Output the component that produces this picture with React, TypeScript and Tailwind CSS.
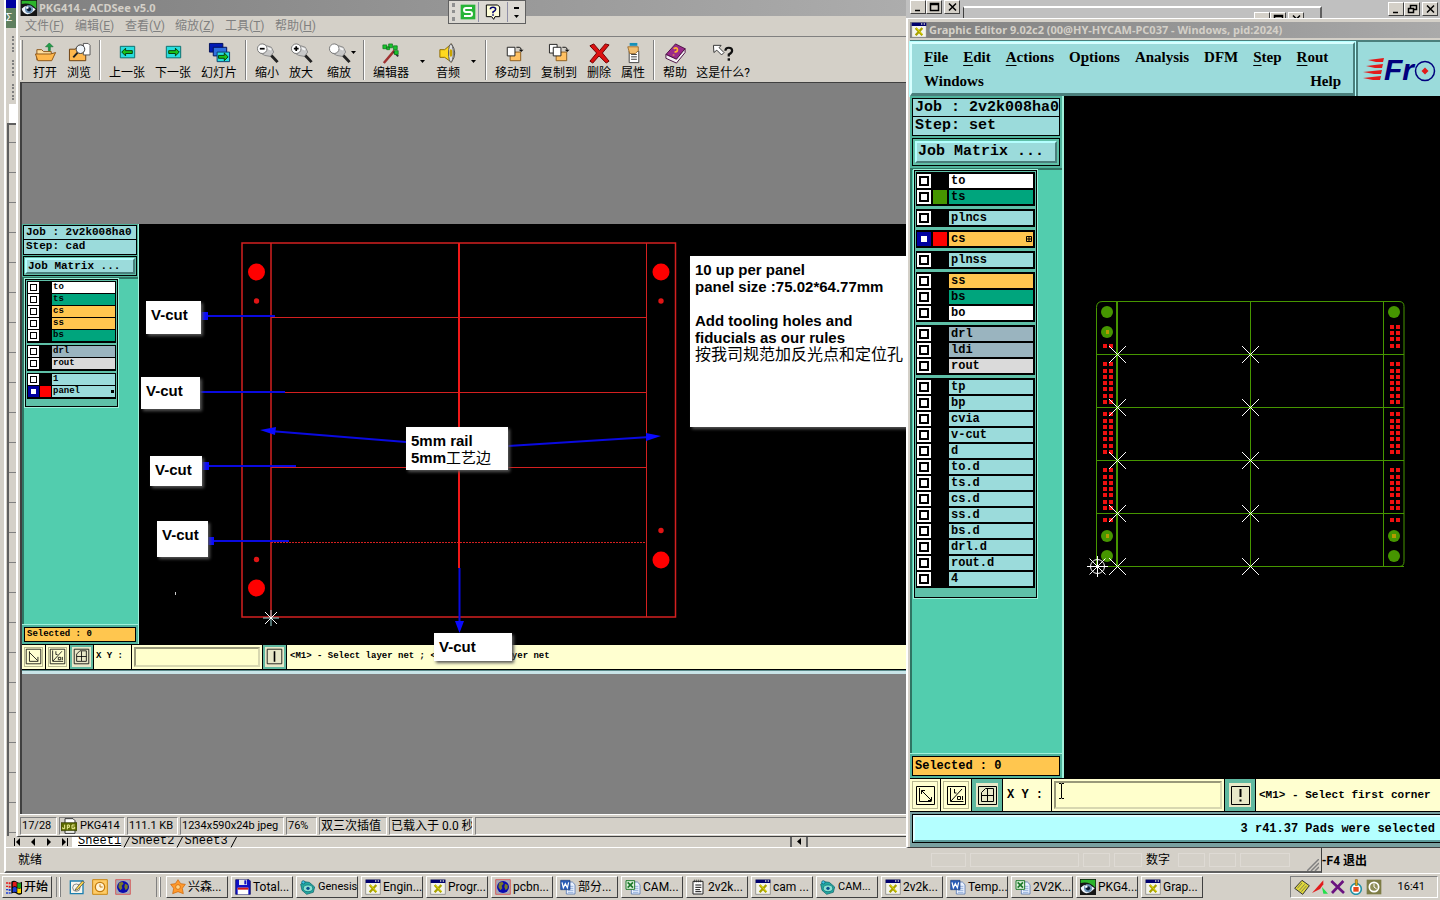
import { Fragment, type ReactNode } from 'react';

/**
 * CAM workstation desktop: spreadsheet at the back, ACDSee viewer on the left,
 * Graphic Editor on the right, taskbar below.
 */

const RAISED = 'border border-t-white border-l-white border-r-[#404040] border-b-[#404040] bg-[#d4d0c8]';
const SUNKEN = 'border border-t-[#808080] border-l-[#808080] border-r-white border-b-white';

type Layer = { name: string; bg: string; swatch?: string; active?: boolean };

const WHITE = 'bg-white';
const GREEN = 'bg-[#00a57d]';
const CYAN = 'bg-[#9bdbdb]';
const AMBER = 'bg-[#ffc64f]';
const SLATE = 'bg-[#9ab4bf]';
const SILVER = 'bg-[#dadada]';

const SET_LAYERS: Layer[][] = [
  [
    { name: 'to', bg: WHITE },
    { name: 'ts', bg: GREEN, swatch: 'bg-[#469600]' },
  ],
  [{ name: 'plncs', bg: CYAN }],
  [{ name: 'cs', bg: AMBER, swatch: 'bg-[#ff0000]', active: true }],
  [{ name: 'plnss', bg: CYAN }],
  [
    { name: 'ss', bg: AMBER },
    { name: 'bs', bg: GREEN },
    { name: 'bo', bg: WHITE },
  ],
  [
    { name: 'drl', bg: SLATE },
    { name: 'ldi', bg: SLATE },
    { name: 'rout', bg: SILVER },
  ],
  ['tp', 'bp', 'cvia', 'v-cut', 'd', 'to.d', 'ts.d', 'cs.d', 'ss.d', 'bs.d', 'drl.d', 'rout.d', '4'].map((name) => ({
    name,
    bg: CYAN,
  })),
];

const CAD_LAYERS: Layer[][] = [
  [
    { name: 'to', bg: WHITE },
    { name: 'ts', bg: GREEN },
    { name: 'cs', bg: AMBER },
    { name: 'ss', bg: AMBER },
    { name: 'bs', bg: GREEN },
  ],
  [
    { name: 'drl', bg: SLATE },
    { name: 'rout', bg: SILVER },
  ],
  [
    { name: '1', bg: CYAN },
    { name: 'panel', bg: CYAN, swatch: 'bg-[#ff0000]', active: true },
  ],
];

/* ---------- icons ---------- */

type IconName =
  | 'open' | 'browse' | 'prev' | 'next' | 'slides' | 'zoomOut' | 'zoomIn' | 'zoom'
  | 'editor' | 'audio' | 'move' | 'copy' | 'delete' | 'props' | 'help' | 'what'
  | 'eye' | 'xwin' | 'star' | 'floppy' | 'genesis' | 'globe' | 'word' | 'excel'
  | 'note' | 'flag' | 'pencil' | 'clock' | 'jpg' | 'sogou' | 'question'
  | 'diamond' | 'wedge' | 'cross' | 'pot' | 'tclock';

const lens = (
  <>
    <path d="M7 2.500l9 3 2.500 5-3.500 4.500-6-1L4 11z" fill="#c8c8c8" stroke="#8a8a8a" />
    <path d="M9 5l7 3" stroke="#f4f4f4" strokeWidth="2" />
    <path d="M16 14l6.500 7" stroke="#222" strokeWidth="3" />
    <circle cx="6.500" cy="7" r="5" fill="#fff" stroke="#777" />
  </>
);

const pageToFolder = (
  <>
    <path d="M8.500 12.500h4l1-2h6v9h-11z" fill="#ffc163" stroke="#8d5d1e" />
    <path d="M5.500 5.500h8v9h-8z" fill="#fff" stroke="#222" />
    <path d="M15 5.500h3q2 0 2 3" fill="none" stroke="#111" />
    <path d="M17.500 8h5L20 10.500z" fill="#111" />
  </>
);

const doc = (
  <>
    <path d="M9.500 4.500h9l4 4v14h-13z" fill="#e9f1ff" stroke="#3c63a8" />
    <path d="M14 11h6M14 14h6M12 17h8M12 20h8" stroke="#6d8fc9" />
  </>
);

const ICONS: Record<IconName, ReactNode> = {
  open: (
    <>
      <path d="M3 19V8h5l2 2h8v3" fill="#ffdf9e" stroke="#8a5418" />
      <path d="M1.500 12.500h16l5-1.500-4 8.500H4z" fill="#ffb84d" stroke="#8a5418" />
      <path d="M15 9V5h-3l4-4 4 4h-3v4z" fill="#22a04a" stroke="#0d6b2b" strokeWidth=".6" />
    </>
  ),
  browse: (
    <>
      <path d="M1.500 7.500h6l2-2h9v14h-17z" fill="#ffb84d" stroke="#6b3f10" />
      <path d="M16 1.500h5l2 2v10h-7z" fill="#fff" stroke="#555" />
      <circle cx="13" cy="7.500" r="4.500" fill="#eef4fa" stroke="#333" />
      <path d="M10 11l-4.500 5" stroke="#222" strokeWidth="2" />
    </>
  ),
  prev: (
    <>
      <path d="M4.500 4.500h15v12h-15z" fill="#27dede" stroke="#0b6d6d" />
      <path d="M6 10.500l4-4V9h7v3h-7v2.500z" fill="#19c219" stroke="#073f07" />
    </>
  ),
  next: (
    <>
      <path d="M4.500 4.500h15v12h-15z" fill="#27dede" stroke="#0b6d6d" />
      <path d="M18 10.500l-4-4V9H7v3h7v2.500z" fill="#19c219" stroke="#073f07" />
    </>
  ),
  slides: (
    <>
      <path d="M1.500 1.500h14v9h-14z" fill="#0019b5" stroke="#00105a" />
      <path d="M5.500 5.500h14v9h-14z" fill="#2f6fe0" stroke="#00105a" />
      <path d="M9.500 10.500h13v10h-13z" fill="#27dede" stroke="#0b3d6d" />
      <path d="M21 15.500l-4-4v2.500h-6v3h6v2.500z" fill="#19c219" stroke="#073f07" />
    </>
  ),
  zoomOut: (
    <>
      {lens}
      <path d="M4 7h5" stroke="#000" strokeWidth="1.800" />
    </>
  ),
  zoomIn: (
    <>
      {lens}
      <path d="M4 7h5M6.500 4.500v5" stroke="#000" strokeWidth="1.800" />
    </>
  ),
  zoom: lens,
  editor: (
    <>
      <path d="M4 22L15 9" stroke="#a03030" strokeWidth="2.500" />
      <path d="M14 10l5 5" stroke="#333" strokeWidth="2" />
      <path d="M3 3h4v4H3zM9 2h4v4H9zM14 4h4v4h-4zM15 9h4v4h-4zM7 5h3v3H7z" fill="#18c52c" stroke="#0b6f18" strokeWidth=".7" />
    </>
  ),
  audio: (
    <>
      <path d="M3 8h5l7-6v19l-7-5H3z" fill="#ffd91f" stroke="#8d6b00" />
      <path d="M15 2q7 9.500 0 19z" fill="#f4f4f4" stroke="#444" />
      <ellipse cx="14.500" cy="11.500" rx="2.500" ry="9.500" fill="#ddd" stroke="#555" />
      <ellipse cx="14.500" cy="11.500" rx="1.500" ry="4" fill="#c9a400" />
    </>
  ),
  move: pageToFolder,
  copy: (
    <>
      <path d="M1.500 2.500h8v9h-8z" fill="#fff" stroke="#222" />
      {pageToFolder}
    </>
  ),
  delete: <path d="M2 4l4-2 6 7 6-7 4 1-7 8.500 7 8.500-3 2-7.500-7.500L5 22l-3-2 7-8.500z" fill="#dd1111" stroke="#6d0000" />,
  props: (
    <>
      <path d="M7.500 9.500h10v12h-10z" fill="#fff" stroke="#444" />
      <path d="M9.500 13h6M9.500 15.500h6M9.500 18h6" stroke="#333" />
      <path d="M8 1h8v3H8z" fill="#1590b8" />
      <path d="M6 5h11v4l-3 3h-6z" fill="#f0bd6f" stroke="#8d5d1e" strokeWidth=".8" />
    </>
  ),
  help: (
    <>
      <path d="M2 13L12 2l10 5-9 11z" fill="#9a2a8b" stroke="#4b1044" />
      <path d="M2 13v4l11 5 9-11V7l-9 11z" fill="#f4f0f4" stroke="#4b1044" />
      <path d="M10 7q4-2 4 1t-3 2M10 13v1" stroke="#ffb42e" strokeWidth="1.800" fill="none" />
    </>
  ),
  what: (
    <>
      <path d="M1.500 3.500h8L7.500 6l5 5-2.500 2.500-5-5-3 2.500z" fill="#fff" stroke="#333" />
      <path d="M14 9q0-3 3.500-3T21 9q0 2-3.500 4v2" stroke="#111" strokeWidth="2.300" fill="none" />
      <path d="M16.300 17h2.500v2.500h-2.500z" fill="#111" />
    </>
  ),
  eye: (
    <>
      <path d="M0 0h24v24H0z" fill="#151515" />
      <path d="M1 1h22v12Q14 3 1 6z" fill="#2cb52c" />
      <path d="M1 13Q9 4 22 14q-8 9-14 7t-7-8z" fill="#eef4fa" />
      <circle cx="12" cy="14" r="6" fill="#6d93b8" />
      <circle cx="12" cy="14" r="3.200" fill="#0a1a30" />
      <circle cx="9.500" cy="11.500" r="1.800" fill="#fff" />
    </>
  ),
  xwin: (
    <>
      <path d="M1 1h22v22H1z" fill="#f4f4ec" stroke="#777" />
      <path d="M1 1h22v5H1z" fill="#00006e" />
      <path d="M15 2h2v2h-2zM19 2h2v2h-2z" fill="#c8c8c8" />
      <path d="M7 9l10 11M17 9L7 20" stroke="#a9a200" strokeWidth="3.500" />
      <path d="M8 9l9 10" stroke="#f1e800" strokeWidth="1.200" />
    </>
  ),
  star: (
    <>
      <path d="M12 1l4 6 7 1-4.500 6L20 22l-8-3-8 3 1.500-8L1 8l7-1z" fill="#ff9a2e" stroke="#c95f00" />
      <circle cx="12" cy="12" r="3.500" fill="#ffd48a" stroke="#c95f00" />
    </>
  ),
  floppy: (
    <>
      <path d="M1 1h20l2 2v20H1z" fill="#1010c8" stroke="#000050" />
      <path d="M6 1h12v8H6z" fill="#e8e8e8" />
      <path d="M14 2h3v6h-3z" fill="#1010c8" />
      <path d="M4 13h16v10H4z" fill="#fff" />
      <path d="M4 13h16v3H4z" fill="#d01818" />
    </>
  ),
  genesis: (
    <>
      <path d="M1 8l5-4 8 1 8 7-2 8-10 3-7-6z" fill="#22a8a0" stroke="#0a5a64" />
      <ellipse cx="12" cy="14" rx="7" ry="5" fill="#8be0d0" stroke="#0c6b73" />
      <circle cx="12" cy="14" r="2.500" fill="#0c4f8c" />
      <circle cx="5" cy="5" r="2.500" fill="#3fc3e8" stroke="#0a5a64" />
    </>
  ),
  globe: (
    <>
      <path d="M1 1h22v22H1z" fill="#a9a9b5" stroke="#d33" />
      <circle cx="12" cy="12" r="9" fill="#0a0ab0" />
      <path d="M6 6l5-2 2 3-3 3 1 4-3 3-3-5zM15 7l4 2v5l-3 3-2-5z" fill="#7a7a28" />
    </>
  ),
  word: (
    <>
      {doc}
      <path d="M1 2h14v14H1z" fill="#2a5db8" stroke="#163a7c" />
      <path d="M3 5l2 8 3-6 3 6 2-8" stroke="#fff" strokeWidth="1.800" fill="none" />
    </>
  ),
  excel: (
    <>
      {doc}
      <path d="M1.500 2.500h13v13h-13z" fill="#e2f3df" stroke="#1f7a2c" strokeWidth="1.500" />
      <path d="M4 5l8 8M12 5l-8 8" stroke="#1f7a2c" strokeWidth="2.600" />
    </>
  ),
  note: (
    <>
      <path d="M4.500 3.500h15v19h-15z" fill="#fff" stroke="#222" strokeWidth="1.500" />
      <path d="M7 1v4M10 1v4M13 1v4M16 1v4" stroke="#222" />
      <path d="M8 9h9M8 12.500h9M8 16h7M8 19h9" stroke="#111" strokeWidth="1.500" />
    </>
  ),
  flag: (
    <>
      <path d="M8 4q4-3 8 0t8 0v18q-4 3-8 0t-8 0z" fill="#000" />
      <path d="M10 5q3-2 6 0v7q-3-2-6 0z" fill="#e21b1b" />
      <path d="M17 6q3 1 5.500 0v7q-3 1-5.500 0z" fill="#1ca01c" />
      <path d="M10 13q3-2 6 0v7q-3-2-6 0z" fill="#1c3fd8" />
      <path d="M17 14q3 1 5.500 0v7q-3 1-5.500 0z" fill="#ffd800" />
      <path d="M0 5h3v2H0zM4 5h3v3H4zM0 10h3v2H0zM4 10h3v3H4z" fill="#e21b1b" />
      <path d="M0 15h3v2H0zM4 15h3v3H4zM0 20h3v2H0zM4 20h3v2H4z" fill="#1c3fd8" />
    </>
  ),
  pencil: (
    <>
      <path d="M2 3h19v19H2z" fill="#f6f6ee" stroke="#1c7fb0" strokeWidth="2" />
      <circle cx="11" cy="13" r="5.500" fill="none" stroke="#555" />
      <path d="M10 15L20 3l3 2-10 11-4 1z" fill="#ffd84d" stroke="#333" />
    </>
  ),
  clock: (
    <>
      <path d="M1 1h22v22H1z" fill="#ffcc66" stroke="#c98714" strokeWidth="1.500" />
      <circle cx="12" cy="12" r="7" fill="#fff4d8" stroke="#c07a10" strokeWidth="2" />
      <path d="M12 8v4h4" stroke="#c07a10" strokeWidth="1.500" fill="none" />
    </>
  ),
  jpg: (
    <>
      <path d="M6 1h12l3 3v19H6z" fill="#fff" stroke="#333" strokeWidth="1.500" />
      <path d="M0 7h24v12H0z" fill="#5d6b00" stroke="#2d3300" />
      <path d="M5.500 10v6H2.500v-2M9.500 17v-6.500h3V14h-3M20.500 10.500h-4V16h4v-2.500h-2" stroke="#f2f29a" strokeWidth="1.500" fill="none" />
    </>
  ),
  sogou: (
    <>
      <path d="M1 1h22v22H1z" fill="#27b437" />
      <path d="M18 6H9Q6 6 6 9t3 3h6q3 0 3 3t-3 3H6" stroke="#fff" strokeWidth="3" fill="none" />
    </>
  ),
  question: (
    <>
      <path d="M2 1.500h17l3 3V19h-7l-2 4-3-4H2z" fill="#ffffd8" stroke="#000" strokeWidth="1.500" />
      <path d="M8 8q0-3 4-3t4 3q0 2-4 4v2M12 15.500v2" stroke="#00006e" strokeWidth="2.300" fill="none" />
    </>
  ),
  diamond: (
    <>
      <path d="M1 14L12 2l11 8-10 13z" fill="#e0d83a" stroke="#333" strokeWidth="1.500" />
      <path d="M5 14l7-8M8 17l8-9M11 19l8-9" stroke="#555" />
    </>
  ),
  wedge: (
    <>
      <path d="M0 21L17 2v6l-5 7z" fill="#e21b1b" />
      <path d="M15 12l9 10h-7z" fill="#22e04a" />
    </>
  ),
  cross: <path d="M2 3l19 18M20 3L3 21" stroke="#6a1280" strokeWidth="4" />,
  pot: (
    <>
      <circle cx="12" cy="15" r="8" fill="#fff" stroke="#2293a8" strokeWidth="2.500" />
      <path d="M8 12h8v7H8z" fill="#e8481c" />
      <path d="M11 1h3v9h-3z" fill="#e8b31c" stroke="#8a5a00" />
    </>
  ),
  tclock: (
    <>
      <path d="M1 1h22v22H1z" fill="#7d7c45" />
      <circle cx="12" cy="12" r="7" fill="#8f8e58" stroke="#fff" strokeWidth="2.500" />
      <path d="M12 7v5l4 3" stroke="#fff" strokeWidth="1.500" fill="none" />
    </>
  ),
};

function Icon({ name, className = 'size-4' }: { name: IconName; className?: string }) {
  return (
    <svg viewBox="0 0 24 24" fill="none" aria-hidden="true" className={`shrink-0 ${className}`}>
      {ICONS[name]}
    </svg>
  );
}

function Caret({ className = '' }: { className?: string }) {
  return (
    <svg viewBox="0 0 5 3" aria-hidden="true" className={`h-[3px] w-[5px] ${className}`}>
      <path d="M0 0h5L2.500 3z" fill="#000" />
    </svg>
  );
}

/* ---------- Graphic Editor parts, shared by the live window and the opened capture ---------- */

function LayerList({ groups, small, id }: { groups: Layer[][]; small?: boolean; id: string }) {
  return (
    <div
      className={`flex flex-col border border-black bg-[#5fc0a8] outline outline-[#9ff0da] ${
        small ? 'w-[93px] gap-[2px] p-px pb-[7px]' : 'w-[123px] gap-[3px] p-px pb-[9px]'
      }`}
    >
      {groups.map((group, i) => (
        <div key={i} className="flex flex-col bg-black p-px">
          {group.map((l) => (
            <label
              key={l.name}
              htmlFor={`${id}-${l.name}`}
              className={`flex items-center ${small ? 'h-3 gap-px' : 'h-4 gap-[2px]'}`}
            >
              <span className={`flex shrink-0 p-[2px] ${l.active ? 'bg-[#0000a0]' : 'bg-white'}`}>
                <input
                  id={`${id}-${l.name}`}
                  type="checkbox"
                  defaultChecked={l.active}
                  className={`appearance-none border-black bg-white checked:border-[#0000a0] ${
                    small ? 'size-[7px] border' : 'size-[10px] border-2'
                  }`}
                />
              </span>
              <span className={`shrink-0 ${small ? 'size-[11px]' : 'size-[14px]'} ${l.swatch ?? 'bg-black'}`} />
              <span
                className={`flex flex-1 items-center justify-between ${l.bg} ${
                  small ? 'h-[11px] pl-px text-[9px] leading-[11px]' : 'mr-px h-[14px] pl-[2px] text-xs leading-[14px]'
                }`}
              >
                {l.name}
                {l.active && small && <span className="mr-px size-[3px] bg-black" />}
                {l.active && !small && (
                  <svg viewBox="0 0 6 6" className="mr-px size-[6px]" fill="none" stroke="#000">
                    <path d="M.5.5h5v5h-5zM.5 3h5M3 .5v5" />
                  </svg>
                )}
              </span>
            </label>
          ))}
        </div>
      ))}
    </div>
  );
}

function JobHeader({ step, small }: { step: string; small?: boolean }) {
  const row = small ? 'h-[15px] text-[11px] leading-[13px]' : 'h-[19px] text-[15px] leading-[18px]';
  return (
    <div className={`flex flex-col bg-[#4fb39c] ${small ? 'p-px' : 'p-[2px]'}`}>
      <div className={`overflow-hidden whitespace-pre border border-black bg-[#9bdbdb] px-[2px] ${row}`}>Job : 2v2k008ha0</div>
      <div className={`overflow-hidden whitespace-pre border border-t-0 border-black bg-[#9bdbdb] px-[2px] ${row}`}>Step: {step}</div>
      <div className={`border border-black bg-[#5fc0a8] ${small ? 'mt-px p-px' : 'mt-[2px] p-[2px]'}`}>
        <button
          type="button"
          className={`block w-full border-2 border-t-[#b4ffff] border-l-[#b4ffff] border-r-[#4a7f7c] border-b-[#4a7f7c] bg-[#9bdbdb] pl-px text-left ${
            small ? 'h-4 text-[11px] leading-3' : 'h-[22px] text-[15px] leading-[18px]'
          }`}
        >
          Job Matrix ...
        </button>
      </div>
    </div>
  );
}

function Sidebar({ step, groups, small, id }: { step: string; groups: Layer[][]; small?: boolean; id: string }) {
  return (
    <aside
      className={`flex shrink-0 flex-col border-r-[#9ff0da] bg-[#52cdae] font-bold ${
        small ? 'w-[117px] border-r' : 'w-[154px] border-r-2'
      }`}
    >
      <JobHeader step={step} small={small} />
      <div className={`flex-1 border-t-2 border-l-2 border-[#2f7563] ${small ? 'pl-px' : 'pl-[2px]'}`}>
        <LayerList groups={groups} small={small} id={id} />
      </div>
      <div className={`border-t border-[#9ff0da] bg-[#4fb39c] p-[2px] ${small ? 'text-[9px]' : 'text-xs'}`}>
        <div className={`whitespace-pre border border-black bg-[#ffc64f] pl-[2px] ${small ? 'h-[15px] leading-[13px]' : 'h-5 leading-[18px]'}`}>
          Selected : 0
        </div>
      </div>
    </aside>
  );
}

type ModeName = 'corner' | 'cross' | 'angle' | 'grid' | 'bang' | 'bar';

const MODES: Record<ModeName, ReactNode> = {
  corner: <path d="M5.500 4v12.500h11M5.500 5.500l10 10M16 11v5M12 16" />,
  cross: <path d="M4.500 3v13.500h12M6.500 5.500l10 10M6.500 9V5.500H10M16.500 12v3.500H13" />,
  angle: <path d="M4.500 3v13.500h13M5 16L16 4M8.500 4v4h2M11.500 11.500h3v3h-3zM16.500 11v4" />,
  grid: <path d="M8.500 3.500h8v13h-12v-9zM4.500 10.500h12M10.500 4v12" />,
  bang: <path d="M10.500 4v8M10.500 14.500v2" strokeWidth="2" />,
  bar: <path d="M10.500 4v13" strokeWidth="2" />,
};

function ModeButton({ mode, label, small, on }: { mode: ModeName; label: string; small?: boolean; on?: boolean }) {
  return (
    <button
      type="button"
      aria-label={label}
      className={`flex shrink-0 items-center justify-center ${small ? 'w-[23px] border-2' : 'w-[30px] border-4'} ${
        on ? 'border-[#5fb8a0] bg-[#e8e8c8]' : 'border-[#ffffd0] bg-[#ffffd0] outline-1 -outline-offset-3 outline-[#b8b890]'
      }`}
    >
      <svg viewBox="0 0 21 21" fill="none" stroke="#000" className={small ? 'size-[17px]' : 'size-[21px]'}>
        <path d="M1.500 1.500h18v18h-18z" />
        {MODES[mode]}
      </svg>
    </button>
  );
}

function CommandBar({ id, small, children }: { id: string; small?: boolean; children: ReactNode }) {
  return (
    <div
      className={`flex shrink-0 gap-px overflow-hidden border-y border-black bg-black font-bold ${
        small ? 'h-[26px] text-[9px]' : 'h-[34px] text-xs'
      }`}
    >
      <ModeButton mode={small ? 'corner' : 'cross'} label="Corner mode" small={small} />
      <ModeButton mode="angle" label="Angle mode" small={small} />
      <ModeButton mode="grid" label="Grid snap" small={small} on />
      <label
        htmlFor={`${id}-xy`}
        className={`flex shrink-0 items-center whitespace-pre bg-[#ffffd0] ${small ? 'w-[37px] pl-[2px]' : 'w-[48px] pl-1'}`}
      >
        X Y :
      </label>
      <div className={`relative flex shrink-0 bg-[#ffffd0] p-[2px] ${small ? 'w-[130px]' : 'w-[172px]'}`}>
        <input
          id={`${id}-xy`}
          type="text"
          className="w-full border-2 border-t-[#99997a] border-l-[#99997a] border-r-[#d8d8b0] border-b-[#d8d8b0] bg-[#ffffcc] px-1"
        />
        {/* text pointer resting in the box */}
        {!small && (
          <svg viewBox="0 0 7 16" className="absolute left-[6px] top-1 h-4 w-[7px]" stroke="#000" fill="none">
            <path d="M1 .5h2l.5.5.5-.5h2M3.500 1v14M1 15.500h2l.5-.5.5.5h2" />
          </svg>
        )}
      </div>
      <ModeButton mode={small ? 'bar' : 'bang'} label="Interrupt" small={small} on />
      <output className="flex min-w-0 flex-1 items-center overflow-hidden whitespace-pre bg-[#ffffd0] pl-[3px]">{children}</output>
    </div>
  );
}

/* ---------- drawings ---------- */

function CadDrawing() {
  return (
    <svg viewBox="139 224 821 420" className="block h-[420px] w-[821px]" fill="none">
      <path d="M139 224h821v420H139z" fill="#000" />
      <g stroke="#d42020">
        <path d="M242 243h433.500v374H242zM271 243v374" strokeWidth="1.500" />
        <path d="M646.500 243v374M271 317.500h375M271 392.500h375M271 467.500h375" />
        <path d="M271 542.500h375" strokeDasharray="2 1" />
        <path d="M459 243v325" stroke="#f01818" strokeWidth="2" />
      </g>
      <g fill="#ff0000">
        {[[256.5, 272], [256.5, 588], [661, 272], [661, 560]].map(([x, y]) => (
          <circle key={`${x}-${y}`} cx={x} cy={y} r="8.500" />
        ))}
        {[[256.5, 301], [256.5, 559.5], [661, 301], [661, 530.5]].map(([x, y]) => (
          <circle key={`${x}-${y}`} cx={x} cy={y} r="2.700" fill="#e01515" />
        ))}
      </g>
      <g stroke="#0a0ae0" strokeWidth="2">
        <path d="M201 316h74M200 392h85M202 466h94M208 541h81M459.500 568v56" />
        <path d="M270 431l136 11M508 446l142-9" />
      </g>
      <g fill="#0a0aff">
        <path d="M201 312h7v8h-7zM202 462h7v8h-7zM208 537h6v8h-6zM260 430l16-3-1 8zM661 436l-15-3v8zM459.500 633l-4.500-12h9z" />
      </g>
      <path d="M271 610v16M263 618h16" stroke="#9bdbdb" />
      <path d="M265 612l12 12M277 612l-12 12" stroke="#fff" />
      <path d="M175.500 592v3" stroke="#ccc" />
    </svg>
  );
}

const BLOCKS = [
  [362, 369, 375, 381, 387, 394, 400],
  [412, 419, 425, 431, 437, 444, 450],
  [468, 475, 481, 487, 493, 500, 506],
  [518],
].flat();

const PADS: { x: number; rows: number[] }[] = [
  { x: 1103, rows: [344, ...BLOCKS] },
  { x: 1109, rows: [344, ...BLOCKS] },
  { x: 1390, rows: [325, 331, 337, 344, ...BLOCKS] },
  { x: 1396, rows: [325, 331, 337, 344, ...BLOCKS] },
];

function PanelDrawing() {
  const rails = [354.5, 407.5, 460.5, 513.5, 566.5];
  return (
    <svg viewBox="1064 96 376 682" className="block h-[682px] w-[376px]" fill="none">
      <g stroke="#469600">
        <path d="M1102 301.500h297q5 0 5 5v255q0 5-5 5h-302.500v-259q0-6 6-6z" />
        <path d="M1117 302v264" strokeWidth="2" />
        <path d="M1250.500 302v264M1383.500 302v264" />
        {rails.map((y) => (
          <path key={y} d={`M1097 ${y}h307`} />
        ))}
      </g>
      <g fill="#469600">
        {[[1107, 312], [1107, 332], [1107, 536], [1107, 556], [1394, 312], [1394, 536], [1394, 556]].map(([x, y]) => (
          <circle key={`${x}-${y}`} cx={x} cy={y} r="6" />
        ))}
      </g>
      <path d="M1106 330h3v4h-3zM1106 534h3v4h-3zM1392 534h4v4h-4z" fill="#b49b00" />
      {PADS.map(({ x, rows }) => rows.map((y) => <rect key={`${x}-${y}`} x={x} y={y} width="4" height="4" fill="#f01010" />))}
      <g stroke="#fff">
        {rails.map((y) =>
          [1117.5, 1250.5].map((x) => (
            <path key={`${x}-${y}`} d={`M${x - 8.5} ${y - 8.5}l17 17M${x + 8.5} ${y - 8.5}l-17 17`} />
          )),
        )}
        <path d="M1087 566.500h21M1097.500 556v21M1089.500 558.500l16 16M1105.500 558.500l-16 16" />
        <circle cx="1097.500" cy="566.500" r="7" />
      </g>
    </svg>
  );
}

/* ---------- ACDSee ---------- */

type Tool = { icon: IconName; label: string; w: string; menu?: boolean };

const TOOLS: Tool[][] = [
  [
    { icon: 'open', label: '打开', w: 'w-[34px]' },
    { icon: 'browse', label: '浏览', w: 'w-[34px]' },
  ],
  [
    { icon: 'prev', label: '上一张', w: 'w-[46px]' },
    { icon: 'next', label: '下一张', w: 'w-[46px]' },
    { icon: 'slides', label: '幻灯片', w: 'w-[46px]' },
  ],
  [
    { icon: 'zoomOut', label: '缩小', w: 'w-[34px]' },
    { icon: 'zoomIn', label: '放大', w: 'w-[34px]' },
    { icon: 'zoom', label: '缩放', w: 'w-[42px]' },
  ],
  [
    { icon: 'editor', label: '编辑器', w: 'w-[46px]', menu: true },
    { icon: 'audio', label: '音频', w: 'w-[34px]', menu: true },
  ],
  [
    { icon: 'move', label: '移动到', w: 'w-[46px]' },
    { icon: 'copy', label: '复制到', w: 'w-[46px]' },
    { icon: 'delete', label: '删除', w: 'w-[34px]' },
    { icon: 'props', label: '属性', w: 'w-[34px]' },
  ],
  [
    { icon: 'help', label: '帮助', w: 'w-[34px]' },
    { icon: 'what', label: '这是什么?', w: 'w-[62px]' },
  ],
];

const ACD_MENU = [
  ['文件', 'F'],
  ['编辑', 'E'],
  ['查看', 'V'],
  ['缩放', 'Z'],
  ['工具', 'T'],
  ['帮助', 'H'],
];

const NOTE =
  'absolute bg-white pl-[5px] pt-[5px] font-[Liberation_Sans,Noto_Sans_CJK_SC,sans-serif] text-[15px] font-bold leading-[17px] shadow-[2px_2px_3px_#555]';

function Capture() {
  return (
    <div className="relative flex w-[938px] shrink-0 flex-col bg-black">
      <div className="flex h-[420px]">
        <Sidebar step="cad" groups={CAD_LAYERS} small id="cad" />
        <CadDrawing />
      </div>
      <CommandBar id="cad" small>
        <span>{'<M1> - Select layer net ; <'}</span>
        <span className="ml-[76px]">yer net</span>
      </CommandBar>
      <div className="h-1 border-t border-[#5c8c8c] bg-[#c8e4e8]" />

      {/* notes pasted over the drawing */}
      <div className={`${NOTE} left-[124px] top-[77px] h-[33px] w-[55px]`}>V-cut</div>
      <div className={`${NOTE} left-[119px] top-[153px] h-[32px] w-[59px]`}>V-cut</div>
      <div className={`${NOTE} left-[128px] top-[232px] h-[30px] w-[52px]`}>V-cut</div>
      <div className={`${NOTE} left-[135px] top-[297px] h-[36px] w-[51px]`}>V-cut</div>
      <div className={`${NOTE} left-[412px] top-[409px] h-[28px] w-[78px]`}>V-cut</div>
      <div className={`${NOTE} left-[384px] top-[203px] h-[43px] w-[102px]`}>
        <p>5mm rail</p>
        <p>
          5mm<span className="font-normal">工艺边</span>
        </p>
      </div>
      <div className={`${NOTE} left-[668px] top-[32px] h-[171px] w-[252px] whitespace-nowrap`}>
        <p>10 up per panel</p>
        <p>panel size :75.02*64.77mm</p>
        <br />
        <p>Add tooling holes and</p>
        <p>fiducials as our rules</p>
        <p className="text-base font-normal leading-[17px]">按我司规范加反光点和定位孔</p>
      </div>
    </div>
  );
}

function Cell({ className = '', children }: { className?: string; children?: ReactNode }) {
  return <div className={`flex h-[18px] shrink-0 items-center overflow-hidden whitespace-nowrap px-px ${SUNKEN} ${className}`}>{children}</div>;
}

function AcdSee() {
  return (
    <section className="absolute inset-x-[16px] top-0 bottom-[36px] flex flex-col border-b border-l-2 border-b-[#404040] border-l-white bg-[#d4d0c8] pl-[2px]">
      <header className="flex h-4 shrink-0 items-center gap-[2px] overflow-hidden bg-linear-to-r from-[#808080] to-[#c8c8c8] pl-px">
        <Icon name="eye" />
        <h1 className="font-[Noto_Sans,sans-serif] text-[11px] font-bold leading-[14px] text-[#d4d0c8]">PKG414 - ACDSee v5.0</h1>
      </header>
      <nav className="flex h-5 shrink-0 items-center pl-[5px] text-xs text-[#808080]">
        {ACD_MENU.map(([label, key]) => (
          <button key={key} type="button" className="w-[50px] text-left">
            {label}(<u>{key}</u>)
          </button>
        ))}
      </nav>
      <div className="flex h-[46px] shrink-0 border-t border-[#808080] pt-[3px] text-xs">
        <div className="mr-[5px] h-10 w-[3px] border-l border-r border-l-white border-r-[#808080]" />
        {TOOLS.map((group, i) => (
          <Fragment key={i}>
            {i > 0 && <div className="mx-[3px] h-10 w-[2px] border-l border-r border-l-[#808080] border-r-white" />}
            {group.map((t) => (
              <Fragment key={t.label}>
                <button type="button" className={`relative flex shrink-0 flex-col items-center whitespace-nowrap pt-[2px] leading-4 ${t.w}`}>
                  <Icon name={t.icon} className="size-[23px]" />
                  {t.label}
                  {t.icon === 'zoom' && <Caret className="absolute right-[4px] top-[11px]" />}
                </button>
                {t.menu && (
                  <button type="button" aria-label={`${t.label} 菜单`} className="flex w-[17px] items-center justify-center">
                    <Caret />
                  </button>
                )}
              </Fragment>
            ))}
          </Fragment>
        ))}
      </div>
      <div className="flex min-h-0 flex-1 items-center overflow-hidden border-t border-l-2 border-[#404040] bg-[#808080] font-[Liberation_Mono,monospace]">
        <Capture />
      </div>
      <footer className="flex h-[22px] shrink-0 items-end gap-[2px] border-t border-white pb-px text-[11px]">
        <Cell className="w-[37px]">17/28</Cell>
        <Cell className="w-[66px] gap-[3px]">
          <Icon name="jpg" />
          PKG414
        </Cell>
        <Cell className="w-[51px]">111.1 KB</Cell>
        <Cell className="w-[104px]">1234x590x24b jpeg</Cell>
        <Cell className="w-[31px]">76%</Cell>
        <Cell className="w-[68px] text-xs">双三次插值</Cell>
        <Cell className="w-[84px] text-xs">已载入于 0.0 秒</Cell>
        <Cell className="flex-1" />
      </footer>
    </section>
  );
}

/* ---------- Graphic Editor ---------- */

const EDITOR_MENU = [
  ['', 'F', 'ile'],
  ['', 'E', 'dit'],
  ['', 'A', 'ctions'],
  ['O', 'p', 'tions'],
  ['Analysis', '', ''],
  ['DFM', '', ''],
  ['', 'S', 'tep'],
  ['', 'R', 'out'],
];

function GraphicEditor() {
  return (
    <section className="absolute left-[906px] right-0 top-[18px] bottom-[25px] flex flex-col overflow-hidden border-b border-l-2 border-t border-b-[#404040] border-l-white border-t-white bg-[#d4d0c8] pl-[2px] pt-[3px]">
      <header className="flex h-4 shrink-0 items-center gap-[2px] overflow-hidden whitespace-nowrap bg-linear-to-r from-[#808080] to-[#aaaaaa] pl-px">
        <Icon name="xwin" />
        <h2 className="font-[Noto_Sans,sans-serif] text-[11px] font-bold leading-[14px] text-[#d4d0c8]">
          Graphic Editor 9.02c2 (00@HY-HYCAM-PC037 - Windows, pid:2024)
        </h2>
      </header>

      <div className="mt-[2px] flex h-14 shrink-0 gap-[3px] bg-[#4a7f7c] pt-[2px] font-[Liberation_Serif,serif] text-[15px] font-bold">
        <nav className="flex w-[445px] shrink-0 flex-col border-2 border-b-3 border-t-[#d8ffff] border-l-[#d8ffff] border-r-[#4a7f7c] border-b-[#4a7f7c] bg-[#9bdbdb] px-3 pt-px leading-6 outline outline-[#b4ffff]">
          <div className="flex gap-[15px]">
            {EDITOR_MENU.map(([pre, key, rest]) => (
              <button key={pre + key + rest} type="button" className="h-6">
                {pre}
                {key && <u className="underline-offset-3">{key}</u>}
                {rest}
              </button>
            ))}
          </div>
          <div className="flex justify-between">
            <button type="button" className="h-6">Windows</button>
            <button type="button" className="h-6">Help</button>
          </div>
        </nav>
        <div className="flex flex-1 items-center overflow-hidden whitespace-nowrap bg-[#9bdbdb] pl-1 font-[Liberation_Sans,sans-serif] text-[30px] font-bold italic text-[#00007d]">
          <svg viewBox="0 0 22 24" className="h-6 w-[22px] shrink-0" fill="#e21b1b">
            <path d="M6 3l16-2-1 4h-7zM4 9l17-2-1 4h-7zM1 15l19-2-1 4h-7zM1 21l18-2-1 4h-7z" />
          </svg>
          Fr
          <svg viewBox="0 0 22 22" className="mt-1 size-[22px] shrink-0" fill="none">
            <circle cx="11" cy="11" r="9.500" stroke="#00007d" strokeWidth="1.500" />
            <path d="M11 7.500l3.500 3.500-3.500 3.500L7.500 11z" fill="#e21b1b" />
          </svg>
        </div>
      </div>

      <div className="flex min-h-0 flex-1 flex-col bg-black font-[Liberation_Mono,monospace]">
        <div className="flex min-h-0 flex-1 overflow-hidden">
          <Sidebar step="set" groups={SET_LAYERS} id="set" />
          <PanelDrawing />
        </div>
        <CommandBar id="set">
          <span className="text-[11px]">{'<M1> - Select first corner'}</span>
        </CommandBar>
        <div className="h-[35px] shrink-0 bg-[#78a0a0] pb-[3px] pl-[2px] pt-[2px]">
          <div className="h-[29px] border border-r-0 border-black">
            <output className="flex h-full items-center justify-end border-2 border-r-0 border-t-[#e0ffff] border-l-[#e0ffff] border-b-[#5c9c9c] bg-[#b4ffff] pr-[5px] text-xs font-bold">
              3 r41.37 Pads were selected
            </output>
          </div>
        </div>
      </div>
    </section>
  );
}

/* ---------- windows at the back ---------- */

type Ctl = 'min' | 'max' | 'restore' | 'close';

const CTL_PATHS: Record<Ctl, string> = {
  min: 'M2 8.500h5',
  max: 'M1.500 1.500h8v7h-8zM1.500 2.500h8',
  restore: 'M3.500 4V1.500h6v4H7M1.500 4.500h5v4h-5z',
  close: 'M2 1.500l7 7M9 1.500l-7 7',
};

function Controls({ set }: { set: Ctl[] }) {
  return (
    <div className="flex">
      {set.map((c) => (
        <button key={c} type="button" aria-label={c} className={`flex h-[14px] w-4 items-center justify-center ${RAISED} ${c === 'close' ? 'ml-[2px]' : ''}`}>
          <svg viewBox="0 0 11 10" className="h-[10px] w-[11px]" fill="none" stroke="#000" strokeWidth="1.500">
            <path d={CTL_PATHS[c]} />
          </svg>
        </button>
      ))}
    </div>
  );
}

function TabEdge() {
  return (
    <svg viewBox="0 0 10 12" className="h-3 w-[10px] shrink-0" stroke="#000" fill="none">
      <path d="M9 0L3 11.500" />
    </svg>
  );
}

const STATUS_CELLS = ['w-[35px]', 'w-[109px]', 'w-[27px]', 'w-[28px]'];

function Spreadsheet() {
  return (
    <section className="absolute left-[4px] right-[118px] top-0 bottom-0 flex flex-col border-b-2 border-l-2 border-r border-b-[#606060] border-l-white border-r-[#404040] bg-[#d4d0c8]">
      <div className="flex min-h-0 flex-1 flex-col overflow-hidden">
        <div className="h-2 w-3 shrink-0 bg-[#0000a0]" />
        <div className="h-5 w-3 shrink-0 bg-[#5f7f5f] text-[11px] leading-5 text-white">Σ</div>
        <div className="h-[76px] w-3 shrink-0 pl-[6px] pt-2">
          {[0, 1, 2].map((n) => (
            <div key={n} className="mb-2 h-4 w-[2px] border-l-2 border-dotted border-[#808080]" />
          ))}
        </div>
        <div className="ml-[3px] h-[19px] w-2 shrink-0 bg-white" />
        <div className="ml-px w-[9px] flex-1 border-l-2 border-t-2 border-[#606060]">
          <div className="h-[18px] border-b border-[#808080]" />
          {Array.from({ length: 23 }, (_, n) => (
            <div key={n} className="h-[30px] border-b border-[#808080]" />
          ))}
        </div>
      </div>
      <div className="flex h-3 shrink-0 items-center border-b border-white pl-2 font-[Liberation_Mono,monospace] text-xs leading-[11px]">
        <svg viewBox="0 0 56 8" className="mr-[2px] h-2 w-14 shrink-0" fill="#000">
          <path d="M0 0h1v8H0zM6 0v8L2 4zM21 0v8l-4-4zM33 0v8l4-4zM48 0v8l4-4zM53 0h1v8h-1z" />
        </svg>
        <button type="button" className="bg-white pl-[6px] underline">Sheet1</button>
        <TabEdge />
        <button type="button">Sheet2</button>
        <TabEdge />
        <button type="button">Sheet3</button>
        <TabEdge />
        <div className="ml-[552px] flex w-[18px] items-center justify-center self-stretch border-x-2 border-[#606060]">
          <svg viewBox="0 0 4 7" className="h-[7px] w-1"><path d="M4 0v7L0 3.500z" /></svg>
        </div>
      </div>
      <footer className="flex h-[23px] shrink-0 items-center gap-[4px] pl-[12px] pr-[31px] text-xs">
        <span className="mr-auto">就绪</span>
        {STATUS_CELLS.map((w) => (
          <span key={w} className={`h-[14px] border border-[#dedad4] ${w}`} />
        ))}
        <span className="w-[28px]">数字</span>
        <span className="h-[14px] w-[27px] border border-[#dedad4]" />
        <span className="h-[14px] w-[27px] border border-[#dedad4]" />
        <span className="h-[14px] w-[50px] border border-[#dedad4]" />
      </footer>
      <svg viewBox="0 0 12 12" className="absolute bottom-0 right-[2px] size-3" stroke="#808080" strokeWidth="1.500">
        <path d="M0 12L12 0M4 12l8-8M8 12l4-4" />
      </svg>
    </section>
  );
}

function Desktop() {
  return (
    <main className="relative min-h-0 flex-1 overflow-hidden bg-[#d4d0c8]">
      {/* full-screen file manager */}
      <section className="flex h-full flex-col">
        <div className="flex-1" />
        <footer className="flex h-6 items-center justify-end pr-[73px] text-xs font-bold">-F4 退出</footer>
      </section>
      <Spreadsheet />
      <AcdSee />
      {/* title bars showing above the editor */}
      <div className="absolute left-[906px] right-0 top-0 flex h-[18px] justify-between bg-[#c0c0c0] pl-1 pr-[2px]">
        <Controls set={['min', 'max', 'close']} />
        <div className="ml-[3px] mr-[66px] mt-[6px] flex flex-1 items-end justify-end border-l border-r-2 border-t-2 border-l-[#404040] border-r-[#606060] border-t-white pr-4">
          <div className="flex h-[6px] overflow-hidden">
            <Controls set={['min', 'max', 'close']} />
          </div>
        </div>
        <div className="pt-[2px]">
          <Controls set={['min', 'restore', 'close']} />
        </div>
      </div>
      <GraphicEditor />
      {/* input method bar */}
      <div className="absolute left-[448px] top-0 flex h-6 w-[78px] items-center border border-[#606060] bg-[#dcd9d3]">
        <div className="mx-[3px] h-[18px] w-[3px] border-l-3 border-dotted border-[#909090]" />
        <button type="button" aria-label="搜狗" className="flex h-5 w-[21px] items-center justify-center border-r border-[#9090a8]">
          <Icon name="sogou" />
        </button>
        <button type="button" aria-label="帮助" className="flex h-5 w-[29px] items-center justify-center border-r border-[#9090a8]">
          <Icon name="question" />
        </button>
        <button type="button" aria-label="选项" className="flex flex-1 flex-col items-center gap-[6px]">
          <span className="h-[2px] w-[5px] bg-black" />
          <Caret />
        </button>
      </div>
    </main>
  );
}

/* ---------- taskbar ---------- */

const TASKS: [IconName, string][] = [
  ['star', '兴森...'],
  ['floppy', 'Total...'],
  ['genesis', 'Genesis'],
  ['xwin', 'Engin...'],
  ['xwin', 'Progr...'],
  ['globe', 'pcbn...'],
  ['word', '部分...'],
  ['excel', 'CAM...'],
  ['note', '2v2k...'],
  ['xwin', 'cam ...'],
  ['genesis', 'CAM...'],
  ['xwin', '2v2k...'],
  ['word', 'Temp...'],
  ['excel', '2V2K...'],
  ['eye', 'PKG4...'],
  ['xwin', 'Grap...'],
];

function Grip() {
  return (
    <div className="flex h-5 gap-[2px]">
      <div className="w-px bg-[#808080]" />
      <div className="w-[2px] border-l border-r border-l-white border-r-[#808080]" />
    </div>
  );
}

function Taskbar() {
  return (
    <footer className="flex h-[27px] shrink-0 items-center border-t border-white bg-[#d4d0c8] px-[2px] text-xs">
      <button type="button" className={`mr-1 flex h-[22px] w-[50px] items-center gap-[2px] pl-[3px] font-medium ${RAISED}`}>
        <Icon name="flag" />
        开始
      </button>
      <Grip />
      <div className="flex w-[95px] gap-[7px] pl-2">
        {(['pencil', 'clock', 'globe'] as IconName[]).map((n) => (
          <button key={n} type="button" aria-label={n}>
            <Icon name={n} />
          </button>
        ))}
      </div>
      <Grip />
      <nav className="ml-[5px] flex flex-1 gap-[3px]">
        {TASKS.map(([icon, label], i) => (
          <button
            key={i}
            type="button"
            className={`flex h-[22px] w-[62px] items-center gap-[2px] whitespace-nowrap pl-[3px] ${RAISED} ${
              icon === 'genesis' ? 'text-[11px]' : 'text-xs'
            }`}
          >
            <Icon name={icon} />
            {label}
          </button>
        ))}
      </nav>
      <div className={`flex h-[22px] w-[148px] items-center gap-[2px] pl-[3px] ${SUNKEN}`}>
        {(['diamond', 'wedge', 'cross', 'pot', 'tclock'] as IconName[]).map((n) => (
          <Icon key={n} name={n} />
        ))}
        <time className="ml-auto mr-3 text-[11px]">16:41</time>
      </div>
    </footer>
  );
}

export default function App() {
  return (
    <div className="flex h-screen flex-col overflow-hidden font-[Roboto,Noto_Sans_CJK_SC,sans-serif] text-black">
      <Desktop />
      <Taskbar />
    </div>
  );
}
